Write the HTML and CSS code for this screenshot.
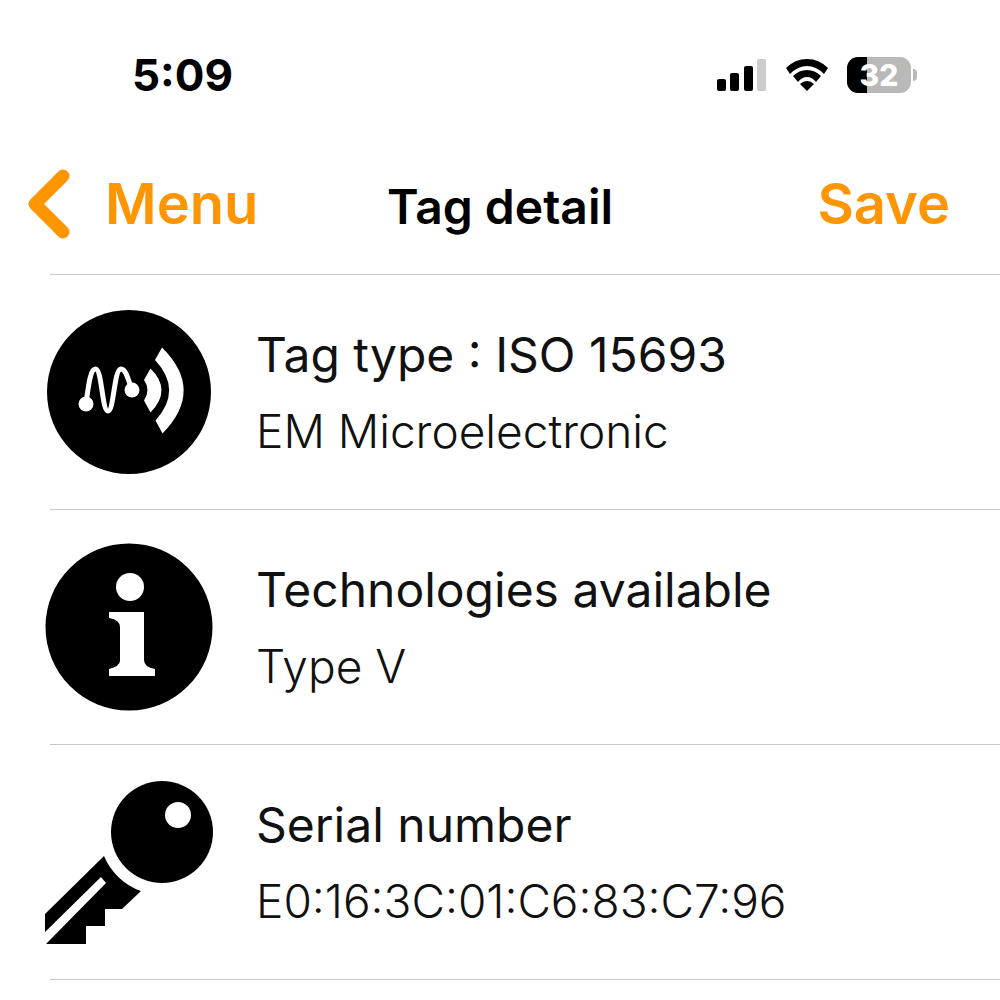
FILE: index.html
```html
<!DOCTYPE html>
<html lang="en">
<head>
    <meta charset="UTF-8">
    <meta name="viewport" content="width=device-width, initial-scale=1.0">
    <title>Tag detail</title>
    <link rel="stylesheet" href="styles.css">
</head>
<body>
    <!-- Status bar -->
    <div class="status-bar">
        <span class="time">5:09</span>
        <div class="status-icons">
            <svg class="signal" viewBox="0 0 50 32" aria-hidden="true">
                <rect x="0" y="20" width="9" height="12" rx="2"/>
                <rect x="13" y="14" width="9" height="18" rx="2"/>
                <rect x="27" y="7" width="9" height="25" rx="2"/>
                <rect x="40" y="0" width="9" height="32" rx="2" fill="#ccc"/>
            </svg>
            <svg class="wifi" viewBox="0 0 44 32" aria-hidden="true">
                <path d="M1 9Q10 0 22 0T43 9L39 15Q31 7 22 7T5 15Z"/>
                <path d="M8 17Q14 11 22 11T36 17L31 23Q27 18 22 18T13 23Z"/>
                <path d="M15 25Q18 22 22 22T29 25L22 32Z"/>
            </svg>
            <div class="battery"><span>32</span></div>
        </div>
    </div>

    <!-- Navigation bar -->
    <header class="nav-bar">
        <button class="nav-button back">
            <svg viewBox="0 0 42 70" aria-hidden="true"><path d="M35 7L7 35L35 63"/></svg>
            Menu
        </button>
        <h1>Tag detail</h1>
        <button class="nav-button save">Save</button>
    </header>

    <main class="tag-list">
        <section class="row">
            <svg viewBox="0 0 168 168" aria-hidden="true">
                <circle cx="84" cy="84" r="82"/>
                <g fill="#fff">
                    <circle cx="41" cy="96" r="7.5"/>
                    <circle cx="87" cy="82" r="7.5"/>
                    <path d="M105.500 60.500Q127.500 82 105.500 104.500L99 92.500Q106 82 99 72Z"/>
                    <path d="M117 39.500Q160 82 117.500 125.500L110.500 112.500Q138 82 110 52Z"/>
                </g>
                <path d="M41 96C44 72 46 61 50.500 61C57 61 57 103 63 103C69 103 69 61 76 61C80 61 82 67 87 82" fill="none" stroke="#fff" stroke-width="5"/>
            </svg>
            <div class="row-text">
                <h2>Tag type : ISO 15693</h2>
                <p>EM Microelectronic</p>
            </div>
        </section>
        <section class="row">
            <svg viewBox="0 0 168 168" aria-hidden="true">
                <circle cx="84" cy="84" r="83.500"/>
                <g fill="#fff">
                    <circle cx="85" cy="44" r="14"/>
                    <path d="M64 69H99V117Q99 124 110 126V133H64V126Q75 123 75 118V84Q75 77 64 75Z"/>
                </g>
            </svg>
            <div class="row-text">
                <h2>Technologies available</h2>
                <p>Type V</p>
            </div>
        </section>
        <section class="row">
            <svg viewBox="0 0 168 168" aria-hidden="true">
                <circle cx="117" cy="54" r="51"/>
                <circle cx="133" cy="37" r="13" fill="#fff"/>
                <path d="M59 78A63 63 0 0 0 96 113L77 131H60V148H41V166H1L61 105L56 99L0 154V136Z"/>
            </svg>
            <div class="row-text">
                <h2>Serial number</h2>
                <p>E0:16:3C:01:C6:83:C7:96</p>
            </div>
        </section>
    </main>
</body>
</html>
```

FILE: styles.css
```css
* {
    box-sizing: border-box;
}

body {
    margin: 0;
    background: #fff;
    color: #000;
    font-family: Inter, Roboto, sans-serif;
}

h1, h2, p {
    margin: 0;
}

/* Status bar */
.status-bar {
    display: flex;
    justify-content: space-between;
    align-items: center;
    height: 150px;
    padding: 0 89px 0 132px;
}

.time {
    font-size: 44px;
    font-weight: 700;
}

.status-icons {
    display: flex;
    align-items: center;
    gap: 18px;
}

.signal {
    width: 50px;
    height: 32px;
}

.wifi {
    width: 44px;
    height: 32px;
}

.battery {
    position: relative;
    width: 64px;
    height: 36px;
    border-radius: 11px;
    background: linear-gradient(to right, #000 32%, #b9b9b9 32%);
    color: #fff;
    font-size: 30px;
    font-weight: 800;
    line-height: 36px;
    text-align: center;
}

.battery::after {
    content: "";
    position: absolute;
    top: 12px;
    right: -6px;
    width: 4px;
    height: 12px;
    border-radius: 0 4px 4px 0;
    background: #b9b9b9;
}

/* Navigation bar */
.nav-bar {
    display: grid;
    grid-template-columns: 1fr auto 1fr;
    align-items: center;
    height: 124px;
    padding: 0 28px 16px;
}

.nav-bar h1 {
    padding-top: 4px;
    font-size: 48px;
    font-weight: 600;
}

.nav-button {
    display: flex;
    align-items: center;
    padding: 0;
    border: none;
    background: none;
    color: #ff9500;
    font: 600 56px Inter, Roboto, sans-serif;
    cursor: pointer;
}

.back {
    gap: 35px;
    justify-self: start;
}

.back svg {
    width: 42px;
    height: 70px;
    fill: none;
    stroke: #ff9500;
    stroke-width: 13;
    stroke-linecap: round;
    stroke-linejoin: round;
}

.save {
    justify-self: end;
    margin-right: 22px;
}

/* Tag details */
.tag-list {
    margin-left: 50px;
    border-top: 1px solid #c8c8c8;
}

.row {
    display: flex;
    align-items: center;
    gap: 43px;
    height: 235px;
    border-bottom: 1px solid #c8c8c8;
}

.row svg {
    flex: none;
    width: 168px;
    height: 168px;
    margin-left: -5px;
}

.row-text {
    padding-top: 2px;
    color: #111;
}

.row h2 {
    font-size: 48px;
    font-weight: 400;
    line-height: 76px;
}

.row p {
    font-size: 46px;
    font-weight: 300;
    line-height: 76px;
}
```
